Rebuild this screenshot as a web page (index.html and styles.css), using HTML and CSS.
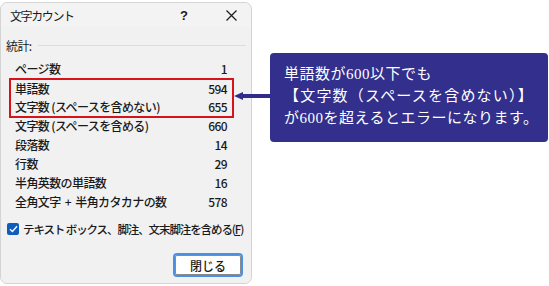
FILE: index.html
```html
<!DOCTYPE html>
<html lang="ja">
<head>
    <meta charset="UTF-8">
    <title>文字カウント</title>
    <link rel="stylesheet" href="styles.css">
</head>
<body>
    <div class="stage">
        <div class="dialog">
            <div class="title-bar">
                <span class="title">文字カウント</span>
                <span class="help">?</span>
                <span class="close">
                    <svg width="11" height="11" viewBox="0 0 11 11">
                        <path d="M0.5 0.5 L10.5 10.5 M10.5 0.5 L0.5 10.5" stroke="#1a1a1a" stroke-width="1.2" fill="none"/>
                    </svg>
                </span>
            </div>

            <div class="section-head">
                <span>統計:</span>
                <span class="rule"></span>
            </div>

            <div class="stats">
                <div class="row"><span>ページ数</span><span>1</span></div>
                <div class="highlight">
                    <div class="row"><span>単語数</span><span>594</span></div>
                    <div class="row"><span>文字数 (スペースを含めない)</span><span>655</span></div>
                </div>
                <div class="row"><span>文字数 (スペースを含める)</span><span>660</span></div>
                <div class="row"><span>段落数</span><span>14</span></div>
                <div class="row"><span>行数</span><span>29</span></div>
                <div class="row"><span>半角英数の単語数</span><span>16</span></div>
                <div class="row"><span>全角文字 &nbsp;+&nbsp; 半角カタカナの数</span><span>578</span></div>
            </div>

            <label class="check">
                <span class="box">
                    <svg width="9" height="8" viewBox="0 0 9 8">
                        <path d="M1 4.2 L3.4 6.5 L8 1.2" stroke="#ffffff" stroke-width="1.3" fill="none"/>
                    </svg>
                </span>
                <span class="check-text">テキスト ボックス、脚注、文末脚注を含める(<u>F</u>)</span>
            </label>

            <div class="footer">
                <button class="btn">閉じる</button>
            </div>
        </div>

        <div class="arrow"></div>

        <div class="callout">
            単語数が600以下でも<br>
            <span class="wide">【文字数（スペースを含めない）】</span><br>
            が600を超えるとエラーになります。
        </div>
    </div>
</body>
</html>
```

FILE: styles.css
```css
body {
    margin: 0;
    background: #ffffff;
    font-family: "Noto Sans CJK JP", "Noto Sans", sans-serif;
    color: #1a1a1a;
}

.stage {
    position: relative;
    display: flex;
    align-items: flex-start;
    width: 549px;
    height: 286px;
}

.dialog {
    box-sizing: border-box;
    width: 252px;
    height: 282px;
    margin-top: 2px;
    background: #f1f1f1;
    border: 1px solid #d4d4d4;
    border-radius: 7px;
    display: flex;
    flex-direction: column;
    font-size: 12px;
    letter-spacing: -0.6px;
}

.dialog > * {
    flex-shrink: 0;
}

.title-bar {
    display: flex;
    align-items: center;
    height: 24px;
    padding-left: 9px;
    background: #f3f3f3;
    border-radius: 7px 7px 0 0;
}

.title {
    flex: 1;
    letter-spacing: -1.4px;
}

.help {
    width: 10px;
    text-align: center;
    font-size: 13px;
    font-weight: bold;
    font-family: "Liberation Sans", sans-serif;
    letter-spacing: 0;
    margin-right: 37px;
}

.close {
    display: flex;
    margin-right: 14px;
}

.section-head {
    display: flex;
    align-items: center;
    gap: 6px;
    padding: 9px 5px 0 5px;
    height: 18px;
}

.rule {
    flex: 1;
    height: 1px;
    background: #dcdcdc;
}

.stats {
    display: flex;
    flex-direction: column;
    padding: 5px 24px 0 8px;
    font-weight: 500;
}

.row {
    display: flex;
    justify-content: space-between;
    height: 19px;
    line-height: 19px;
    padding-left: 6px;
}

.highlight {
    display: flex;
    flex-direction: column;
    height: 36px;
    margin: 0 -7px -2px 0;
    padding-right: 5px;
    border: 2px solid #d7121b;
}

.highlight .row {
    padding-left: 4px;
    height: 18px;
    line-height: 18px;
}

.check {
    display: flex;
    align-items: center;
    gap: 4px;
    height: 16px;
    margin: 10px 0 0 6px;
    font-weight: 500;
    white-space: nowrap;
}

.check-text {
    font-size: 11.5px;
    letter-spacing: -1.1px;
}

.box {
    display: flex;
    align-items: center;
    justify-content: center;
    width: 12px;
    height: 12px;
    background: #0f5cbf;
    border-radius: 2px;
}

.footer {
    display: flex;
    justify-content: flex-end;
    margin-top: 16px;
    padding-right: 8px;
}

.btn {
    box-sizing: border-box;
    width: 70px;
    height: 24px;
    padding: 0;
    background: #ffffff;
    border: 2px solid #4a90e2;
    border-radius: 4px;
    box-shadow: inset 0 0 0 1px #8a8a8a;
    font-family: "Noto Sans CJK JP", sans-serif;
    font-size: 12px;
    font-weight: 500;
    color: #1a1a1a;
}

.arrow {
    position: absolute;
    left: 234px;
    top: 92px;
    width: 36px;
    height: 8px;
}

.arrow::before {
    content: "";
    position: absolute;
    left: 0;
    top: 0;
    border-top: 4px solid transparent;
    border-bottom: 4px solid transparent;
    border-right: 9px solid #2f2c8c;
}

.arrow::after {
    content: "";
    position: absolute;
    left: 8px;
    top: 2px;
    width: 28px;
    height: 4px;
    background: #2f2c8c;
}

.callout {
    box-sizing: border-box;
    width: 278px;
    height: 89px;
    margin: 53px 0 0 18px;
    padding: 10px 0 0 14px;
    background: #322f8d;
    border-radius: 4px;
    color: #ffffff;
    font-family: "Liberation Serif", "Noto Sans CJK JP", serif;
    font-size: 15px;
    line-height: 22px;
    letter-spacing: 0.5px;
}

.callout .wide {
    letter-spacing: 1.2px;
}
```
